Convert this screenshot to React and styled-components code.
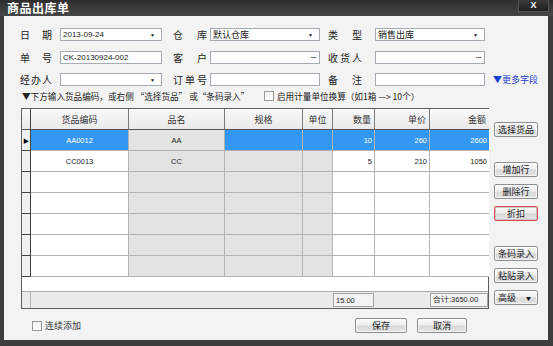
import React from "react";
import styled, { createGlobalStyle } from "styled-components";

const GlobalStyle = createGlobalStyle`
  body {
    margin: 0;
    background: #ffffff;
    font-family: "Noto Sans CJK SC", "Liberation Sans", sans-serif;
  }
`;

const COLS = "9px 98px 96px 78px 30px 42px 55px 59px";

const Window = styled.div`
  width: 553px;
  height: 346px;
  box-sizing: border-box;
  background: #3c3c3c;
  padding: 0 5px 6px 4px;
  display: flex;
  flex-direction: column;
`;

const TitleBar = styled.div`
  height: 16px;
  flex-shrink: 0;
  display: flex;
  align-items: flex-start;
  justify-content: space-between;
  background: linear-gradient(#2e2e2e, #474747);
  margin: 0 -5px 0 -4px;
  padding: 0 4px 0 7px;
`;

const Title = styled.div`
  color: #ffffff;
  font-size: 12px;
  font-weight: bold;
  line-height: 15px;
  letter-spacing: 0.5px;
`;

const CloseButton = styled.div`
  width: 29px;
  height: 11px;
  background: linear-gradient(#3a3a3a, #1f1f1f);
  border: 1px solid #555;
  border-top: none;
  color: #fff;
  font-family: "Liberation Sans", sans-serif;
  font-weight: bold;
  font-size: 9px;
  line-height: 10px;
  text-align: center;
`;

const Body = styled.div`
  flex: 1;
  background: #f3f3f3;
  padding: 12px 10px 0 16px;
  display: flex;
  flex-direction: column;
`;

const FormRows = styled.div`
  display: flex;
  flex-direction: column;
  gap: 9.5px;
`;

const FormRow = styled.div`
  display: flex;
  align-items: center;
  height: 13px;
`;

const Label = styled.div`
  width: ${(p) => p.$w}px;
  margin-left: ${(p) => p.$ml || 0}px;
  margin-right: ${(p) => p.$mr || 0}px;
  display: flex;
  justify-content: space-between;
  font-size: 10px;
  color: #222;
  line-height: 13px;
  flex-shrink: 0;
`;

const Input = styled.div`
  width: ${(p) => p.$w}px;
  height: 13px;
  box-sizing: border-box;
  flex-shrink: 0;
  border: 1px solid #a6abb3;
  background: #ffffff;
  display: flex;
  align-items: center;
  justify-content: space-between;
  padding: 0 3px 0 2px;
  font-family: "Liberation Sans", "Noto Sans CJK SC", sans-serif;
  font-size: 8px;
  color: #222;
`;

const InputCjk = styled.span`
  font-family: "Noto Sans CJK SC", sans-serif;
  font-size: 9px;
`;

const Arrow = styled.span`
  font-size: 5px;
  color: #111;
  margin-right: 3px;
`;

const Dots = styled.span`
  font-size: 8px;
  font-weight: bold;
  color: #333;
  letter-spacing: -0.5px;
  line-height: 8px;
  margin-top: -3px;
`;

const MoreLink = styled.div`
  margin-left: 8px;
  font-size: 9px;
  color: #1c3fcf;
  white-space: nowrap;
`;

const HintRow = styled.div`
  display: flex;
  align-items: center;
  height: 12px;
  margin: 4px 0 6px;
  font-size: 8.6px;
  color: #222;
  white-space: nowrap;
`;

const HintText = styled.div`
  width: 242px;
  padding-left: 2px;
`;

const CheckBox = styled.span`
  display: inline-block;
  width: 8px;
  height: 8px;
  border: 1px solid #9a9a9a;
  background: linear-gradient(#f0f0f0, #ffffff);
  margin-right: ${(p) => p.$mr || 3}px;
  flex-shrink: 0;
`;

const Main = styled.div`
  display: flex;
  align-items: flex-start;
`;

const Grid = styled.div`
  width: 468px;
  height: 201px;
  box-sizing: border-box;
  margin-left: 1px;
  border: 1px solid #5e5e5e;
  background: #ffffff;
  display: flex;
  flex-direction: column;
`;

const HeaderRow = styled.div`
  display: grid;
  grid-template-columns: ${COLS};
  height: 21px;
  flex-shrink: 0;
`;

const HeadCell = styled.div`
  background: linear-gradient(#fafafa, #e9e9e9);
  border-right: 1px solid ${(p) => (p.$dark ? "#444" : "#7a7a7a")};
  border-bottom: 1px solid #555;
  font-size: 9px;
  color: #333;
  display: flex;
  align-items: center;
  justify-content: ${(p) => (p.$right ? "flex-end" : "center")};
  padding-right: ${(p) => (p.$right ? 3 : 0)}px;
  &:last-child {
    border-right: none;
  }
`;

const DataRow = styled.div`
  display: grid;
  grid-template-columns: ${COLS};
  height: 21px;
  flex-shrink: 0;
`;

const TONES = {
  sel: "#3597f4",
  gray: "#e3e3e3",
  white: "#ffffff",
};

const Cell = styled.div`
  background: ${(p) => TONES[p.$tone || "white"]};
  color: ${(p) => (p.$tone === "sel" ? "#ffffff" : "#222")};
  border-right: 1px solid #b3b3b3;
  border-bottom: 1px solid #b3b3b3;
  font-family: "Liberation Sans", sans-serif;
  font-size: 7.5px;
  display: flex;
  align-items: center;
  justify-content: ${(p) => (p.$right ? "flex-end" : "center")};
  padding-right: ${(p) => (p.$right ? 2 : 0)}px;
  &:last-child {
    border-right: none;
  }
`;

const Marker = styled.div`
  background: #f0f0f0;
  border-right: 1px solid #444;
  border-bottom: 1px solid #444;
  font-size: 6px;
  color: #000;
  display: flex;
  align-items: center;
  justify-content: center;
`;

const Filler = styled.div`
  flex: 1;
  background: #ffffff;
`;

const SummaryRow = styled.div`
  display: grid;
  grid-template-columns: ${COLS};
  height: 16px;
  flex-shrink: 0;
  background: #ebebeb;
  border-top: 1px solid #a9a9a9;
`;

const SummaryGap = styled.div`
  border-right: ${(p) => (p.$line ? "1px solid #b8b8b8" : "none")};
  grid-column: ${(p) => p.$span || "auto"};
`;

const SummaryBox = styled.div`
  margin: 1px 1px 1px 0;
  border: 1px solid #a4a4a4;
  background: #f4f4f4;
  font-family: "Liberation Sans", sans-serif;
  font-size: 7.5px;
  color: #222;
  display: flex;
  align-items: center;
  padding-left: 2px;
  white-space: nowrap;
  overflow: hidden;
`;

const SideButtons = styled.div`
  display: flex;
  flex-direction: column;
  margin-left: 5px;
  padding-top: 14px;
  width: 44px;
`;

const Button = styled.div`
  width: ${(p) => p.$w || 44}px;
  height: 15px;
  box-sizing: border-box;
  margin-top: ${(p) => p.$mt || 0}px;
  margin-left: ${(p) => p.$ml || 0}px;
  border: 1px solid ${(p) => (p.$focus ? "#e0474a" : "#8c8e90")};
  border-radius: 2px;
  background: linear-gradient(#fbfbfb 0%, #eeeeee 45%, #d9d9d9 55%, #e4e4e4 100%);
  box-shadow: inset 0 0 0 1px ${(p) => (p.$focus ? "#c9c9c9" : "rgba(255,255,255,0.6)")};
  font-size: 9px;
  color: #222;
  display: flex;
  align-items: center;
  justify-content: center;
  gap: 10px;
`;

const Footer = styled.div`
  display: flex;
  align-items: center;
  padding-top: 9px;
`;

const KeepAdding = styled.div`
  display: flex;
  align-items: center;
  margin-left: 12px;
  width: 323px;
  font-size: 9px;
  color: #333;
`;

const rows = [
  { code: "AA0012", name: "AA", qty: "10", price: "260", amount: "2600", sel: true },
  { code: "CC0013", name: "CC", qty: "5", price: "210", amount: "1050" },
  {},
  {},
  {},
  {},
  {},
];

function TableRow({ row }) {
  const main = row.sel ? "sel" : "white";
  const side = row.sel ? "sel" : "gray";
  return (
    <DataRow>
      <Marker>{row.sel ? "▶" : ""}</Marker>
      <Cell $tone={main}>{row.code}</Cell>
      <Cell $tone="gray">{row.name}</Cell>
      <Cell $tone={side} />
      <Cell $tone={side} />
      <Cell $tone={main} $right>{row.qty}</Cell>
      <Cell $tone={main} $right>{row.price}</Cell>
      <Cell $tone={main} $right>{row.amount}</Cell>
    </DataRow>
  );
}

function Spread({ text }) {
  return text.split("").map((c, i) => <span key={i}>{c}</span>);
}

export default function App() {
  return (
    <>
      <GlobalStyle />
      <Window>
        <TitleBar>
          <Title>商品出库单</Title>
          <CloseButton>X</CloseButton>
        </TitleBar>
        <Body>
          <FormRows>
            <FormRow>
              <Label $w={32} $mr={8}><Spread text="日期" /></Label>
              <Input $w={102}>2013-09-24<Arrow>▼</Arrow></Input>
              <Label $w={34} $ml={11} $mr={3}><Spread text="仓库" /></Label>
              <Input $w={110}><InputCjk>默认仓库</InputCjk><Arrow>▼</Arrow></Input>
              <Label $w={34} $ml={8} $mr={13}><Spread text="类型" /></Label>
              <Input $w={110}><InputCjk>销售出库</InputCjk><Arrow>▼</Arrow></Input>
            </FormRow>
            <FormRow>
              <Label $w={32} $mr={8}><Spread text="单号" /></Label>
              <Input $w={102}>CK-20130924-002</Input>
              <Label $w={34} $ml={11} $mr={3}><Spread text="客户" /></Label>
              <Input $w={110}><span /><Dots>...</Dots></Input>
              <Label $w={34} $ml={8} $mr={13}><Spread text="收货人" /></Label>
              <Input $w={110}><span /><Dots>...</Dots></Input>
            </FormRow>
            <FormRow>
              <Label $w={32} $mr={8}><Spread text="经办人" /></Label>
              <Input $w={102}><span /><Arrow>▼</Arrow></Input>
              <Label $w={34} $ml={11} $mr={3}><Spread text="订单号" /></Label>
              <Input $w={110} />
              <Label $w={34} $ml={8} $mr={13}><Spread text="备注" /></Label>
              <Input $w={110} />
              <MoreLink>▼更多字段</MoreLink>
            </FormRow>
          </FormRows>

          <HintRow>
            <HintText>▼下方输入货品编码，或右侧 “选择货品” 或“条码录入”</HintText>
            <CheckBox $mr={3} />
            启用计量单位换算（如1箱 —&gt; 10个）
          </HintRow>

          <Main>
            <Grid>
              <HeaderRow>
                <HeadCell $dark />
                <HeadCell>货品编码</HeadCell>
                <HeadCell>品名</HeadCell>
                <HeadCell>规格</HeadCell>
                <HeadCell>单位</HeadCell>
                <HeadCell $right>数量</HeadCell>
                <HeadCell $right>单价</HeadCell>
                <HeadCell $right>金额</HeadCell>
              </HeaderRow>
              {rows.map((row, i) => (
                <TableRow key={i} row={row} />
              ))}
              <Filler />
              <SummaryRow>
                <SummaryGap $line />
                <SummaryGap $span="span 4" />
                <SummaryBox>15.00</SummaryBox>
                <SummaryGap />
                <SummaryBox>合计:3650.00</SummaryBox>
              </SummaryRow>
            </Grid>

            <SideButtons>
              <Button>选择货品</Button>
              <Button $mt={25}>增加行</Button>
              <Button $mt={7}>删除行</Button>
              <Button $mt={7} $focus>折扣</Button>
              <Button $mt={25}>条码录入</Button>
              <Button $mt={7}>粘贴录入</Button>
              <Button $mt={7}>
                高级<Arrow>▼</Arrow>
              </Button>
            </SideButtons>
          </Main>

          <Footer>
            <KeepAdding>
              <CheckBox $mr={3} />
              连续添加
            </KeepAdding>
            <Button $w={52}>保存</Button>
            <Button $w={50} $ml={10}>取消</Button>
          </Footer>
        </Body>
      </Window>
    </>
  );
}
